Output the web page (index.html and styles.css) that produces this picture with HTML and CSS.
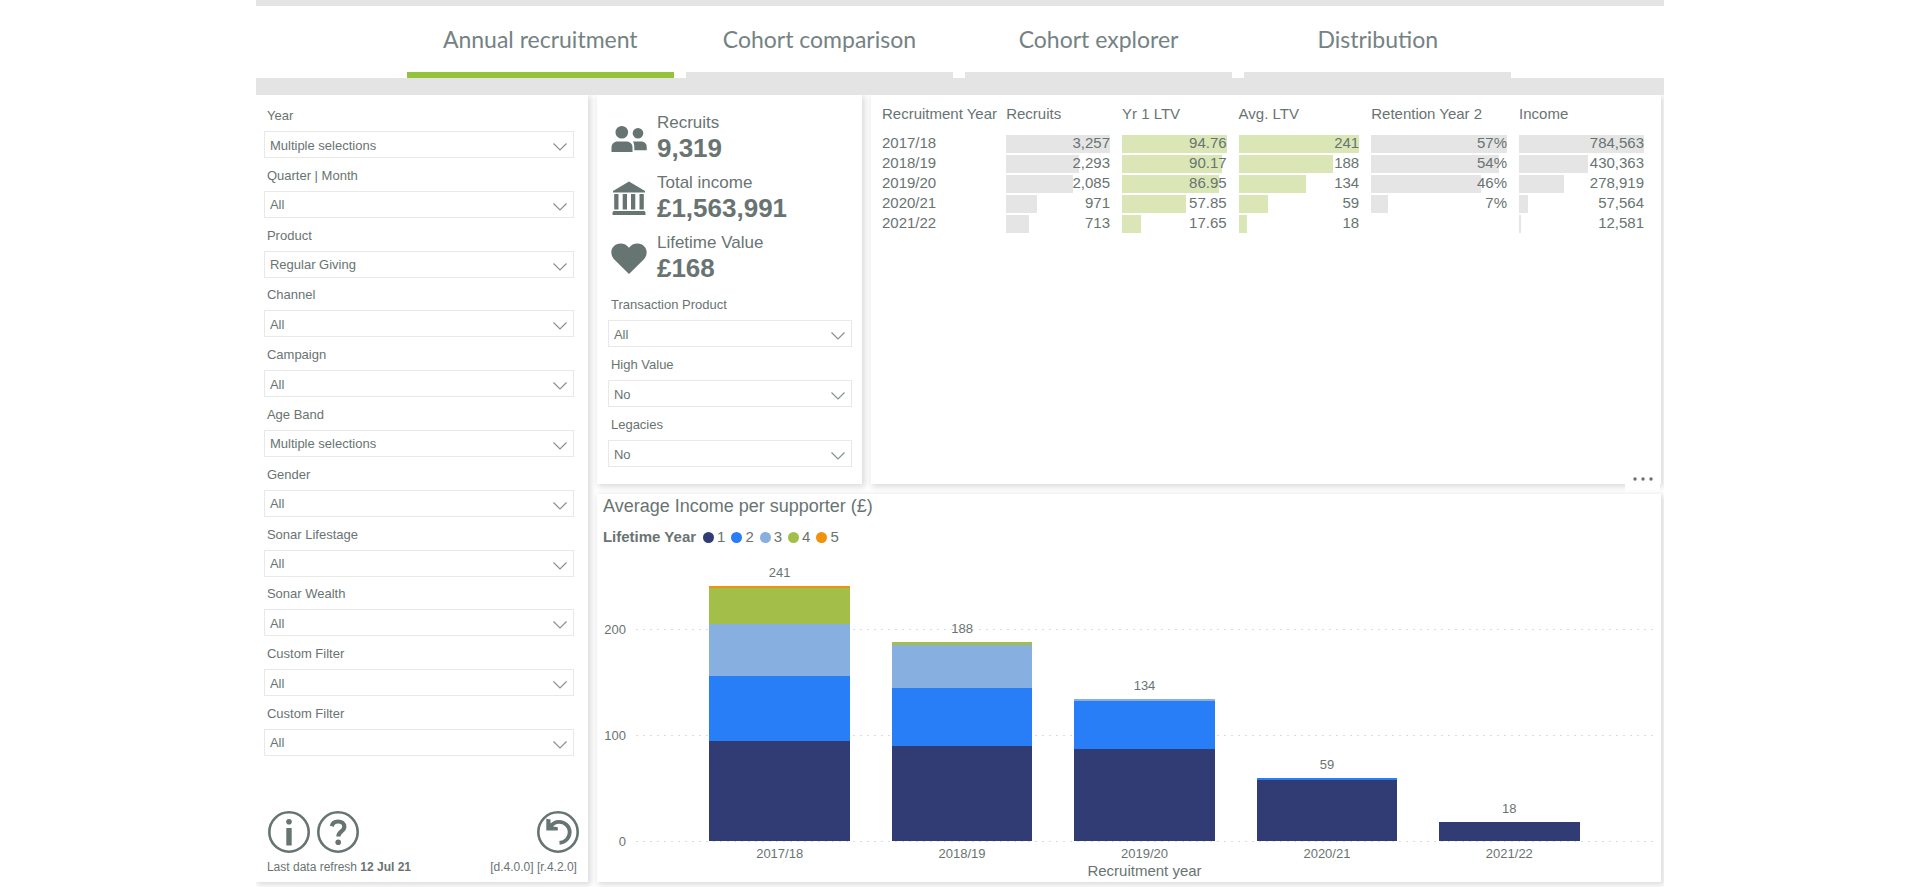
FILE: index.html
```html
<!DOCTYPE html>
<html lang="en">
<head>
<meta charset="utf-8">
<title>Annual recruitment</title>
<link rel="stylesheet" href="styles.css">
</head>
<body>
<svg class="sprite" aria-hidden="true">
  <symbol id="chevron" viewBox="0 0 14 8"><path d="M0.500 0.500 7 7 13.500 0.500" fill="none" stroke="currentColor" stroke-width="1.200"/></symbol>
</svg>
<div class="report">
  <nav class="tabs">
    <a class="tab active" href="#annual" aria-current="page">Annual recruitment</a>
    <a class="tab" href="#comparison">Cohort comparison</a>
    <a class="tab" href="#explorer">Cohort explorer</a>
    <a class="tab" href="#distribution">Distribution</a>
  </nav>

  <main class="board">
    <aside class="panel sidebar">
      <div class="filters">
        <div class="field"><label for="year">Year</label><div class="picker"><select id="year"><option>Multiple selections</option></select><svg><use href="#chevron"/></svg></div></div>
        <div class="field"><label for="quarter">Quarter | Month</label><div class="picker"><select id="quarter"><option>All</option></select><svg><use href="#chevron"/></svg></div></div>
        <div class="field"><label for="product">Product</label><div class="picker"><select id="product"><option>Regular Giving</option></select><svg><use href="#chevron"/></svg></div></div>
        <div class="field"><label for="channel">Channel</label><div class="picker"><select id="channel"><option>All</option></select><svg><use href="#chevron"/></svg></div></div>
        <div class="field"><label for="campaign">Campaign</label><div class="picker"><select id="campaign"><option>All</option></select><svg><use href="#chevron"/></svg></div></div>
        <div class="field"><label for="age">Age Band</label><div class="picker"><select id="age"><option>Multiple selections</option></select><svg><use href="#chevron"/></svg></div></div>
        <div class="field"><label for="gender">Gender</label><div class="picker"><select id="gender"><option>All</option></select><svg><use href="#chevron"/></svg></div></div>
        <div class="field"><label for="lifestage">Sonar Lifestage</label><div class="picker"><select id="lifestage"><option>All</option></select><svg><use href="#chevron"/></svg></div></div>
        <div class="field"><label for="wealth">Sonar Wealth</label><div class="picker"><select id="wealth"><option>All</option></select><svg><use href="#chevron"/></svg></div></div>
        <div class="field"><label for="custom1">Custom Filter</label><div class="picker"><select id="custom1"><option>All</option></select><svg><use href="#chevron"/></svg></div></div>
        <div class="field"><label for="custom2">Custom Filter</label><div class="picker"><select id="custom2"><option>All</option></select><svg><use href="#chevron"/></svg></div></div>
      </div>
      <footer class="footer">
        <div class="tools">
          <button type="button" aria-label="Information"><svg viewBox="0 0 42 42"><circle cx="21" cy="21" r="19.700" fill="none" stroke="currentColor" stroke-width="2.600"/><circle cx="21" cy="10.800" r="2.800" fill="currentColor"/><rect x="18.300" y="17" width="5.400" height="17.500" rx="0.500" fill="currentColor"/></svg></button>
          <button type="button" aria-label="Help"><svg viewBox="0 0 42 42"><circle cx="21" cy="21" r="19.700" fill="none" stroke="currentColor" stroke-width="2.600"/><path d="M14.800 15.200C15.600 11.700 18 10.500 21 10.500c3.600 0 6.300 2 6.300 5.200 0 4.800-5.900 4.700-5.900 9.700" fill="none" stroke="currentColor" stroke-width="4.200"/><circle cx="21.200" cy="31.200" r="2.800" fill="currentColor"/></svg></button>
          <button type="button" class="reset" aria-label="Reset filters"><svg viewBox="0 0 42 42"><circle cx="21" cy="21" r="19.700" fill="none" stroke="currentColor" stroke-width="2.600"/><path d="M13.500 15.700C15.500 12.500 18.500 10.800 22 10.800c6 0 10.700 4.500 10.700 10.300 0 5.700-4.400 10.300-10.200 10.700" fill="none" stroke="currentColor" stroke-width="3.800"/><path d="M9.300 7.800v11.600h11.500v-3.200l-4.500-.7-2.800-3.500V8.500z" fill="currentColor"/></svg></button>
        </div>
        <div class="captions"><span>Last data refresh <b>12 Jul 21</b></span><span>[d.4.0.0] [r.4.2.0]</span></div>
      </footer>
    </aside>

    <section class="panel summary">
      <div class="kpis">
        <div class="kpi">
          <svg viewBox="0 0 36 36"><g fill="currentColor"><circle cx="10.800" cy="12.300" r="6.300"/><circle cx="27" cy="13.300" r="5.300"/><path d="M0.500 32v-4.500c0-3.500 2.500-6 6-6h9c3.500 0 6 2.500 6 6V32z"/><path d="M22 21.500h8c3.300 0 5.700 2.200 5.700 5.200v3.600H23.300V27c0-2.200-.4-4-1.300-5.500z"/></g></svg>
          <div><div class="kpi-name">Recruits</div><div class="kpi-value">9,319</div></div>
        </div>
        <div class="kpi">
          <svg viewBox="0 0 36 36"><path fill="currentColor" d="M18 1.500 34 11v1.500H2V11zM3.200 14h4.300v15.500H3.200zm8.500 0H16v15.500h-4.300zm8.300 0h4.300v15.500H20zm8.500 0h4.300v15.500h-4.300zM2.500 31h31l1 1.500V35h-33v-2.500z"/></svg>
          <div><div class="kpi-name">Total income</div><div class="kpi-value">£1,563,991</div></div>
        </div>
        <div class="kpi">
          <svg viewBox="0 0 36 36"><path fill="currentColor" d="M18 34 3.300 19.500C-3 12.500 1.500 3.500 9.500 3.500c3.500 0 6.500 1.500 8.500 4.200 2-2.700 5-4.200 8.500-4.200 8 0 12.500 9 6.200 16z"/></svg>
          <div><div class="kpi-name">Lifetime Value</div><div class="kpi-value">£168</div></div>
        </div>
      </div>
      <div class="options">
        <div class="field"><label for="transaction">Transaction Product</label><div class="picker"><select id="transaction"><option>All</option></select><svg><use href="#chevron"/></svg></div></div>
        <div class="field"><label for="highvalue">High Value</label><div class="picker"><select id="highvalue"><option>No</option></select><svg><use href="#chevron"/></svg></div></div>
        <div class="field"><label for="legacies">Legacies</label><div class="picker"><select id="legacies"><option>No</option></select><svg><use href="#chevron"/></svg></div></div>
      </div>
    </section>

    <section class="panel cohort">
      <table>
        <colgroup><col class="c-year"><col class="c-recruits"><col class="c-first"><col class="c-avg"><col class="c-retention"><col class="c-income"></colgroup>
        <thead><tr><th>Recruitment Year</th><th>Recruits</th><th>Yr 1 LTV</th><th>Avg. LTV</th><th>Retention Year 2</th><th>Income</th></tr></thead>
        <tbody>
          <tr><th scope="row">2017/18</th>
            <td><div class="cell"><i style="width:100%"></i><span>3,257</span></div></td>
            <td><div class="cell green"><i style="width:100%"></i><span>94.76</span></div></td>
            <td><div class="cell green"><i style="width:100%"></i><span>241</span></div></td>
            <td><div class="cell"><i style="width:100%"></i><span>57%</span></div></td>
            <td><div class="cell"><i style="width:100%"></i><span>784,563</span></div></td></tr>
          <tr><th scope="row">2018/19</th>
            <td><div class="cell"><i style="width:70%"></i><span>2,293</span></div></td>
            <td><div class="cell green"><i style="width:96%"></i><span>90.17</span></div></td>
            <td><div class="cell green"><i style="width:78%"></i><span>188</span></div></td>
            <td><div class="cell"><i style="width:94%"></i><span>54%</span></div></td>
            <td><div class="cell"><i style="width:55%"></i><span>430,363</span></div></td></tr>
          <tr><th scope="row">2019/20</th>
            <td><div class="cell"><i style="width:64%"></i><span>2,085</span></div></td>
            <td><div class="cell green"><i style="width:93%"></i><span>86.95</span></div></td>
            <td><div class="cell green"><i style="width:56%"></i><span>134</span></div></td>
            <td><div class="cell"><i style="width:81%"></i><span>46%</span></div></td>
            <td><div class="cell"><i style="width:36%"></i><span>278,919</span></div></td></tr>
          <tr><th scope="row">2020/21</th>
            <td><div class="cell"><i style="width:30%"></i><span>971</span></div></td>
            <td><div class="cell green"><i style="width:61%"></i><span>57.85</span></div></td>
            <td><div class="cell green"><i style="width:24%"></i><span>59</span></div></td>
            <td><div class="cell"><i style="width:12%"></i><span>7%</span></div></td>
            <td><div class="cell"><i style="width:7%"></i><span>57,564</span></div></td></tr>
          <tr><th scope="row">2021/22</th>
            <td><div class="cell"><i style="width:22%"></i><span>713</span></div></td>
            <td><div class="cell green"><i style="width:18%"></i><span>17.65</span></div></td>
            <td><div class="cell green"><i style="width:7%"></i><span>18</span></div></td>
            <td></td>
            <td><div class="cell"><i style="width:1.6%"></i><span>12,581</span></div></td></tr>
        </tbody>
      </table>
      <button type="button" class="more" aria-label="More options"><svg viewBox="0 0 20 4"><circle cx="2" cy="2" r="1.700"/><circle cx="10" cy="2" r="1.700"/><circle cx="18" cy="2" r="1.700"/></svg></button>
    </section>

    <section class="panel chart">
      <h2>Average Income per supporter (£)</h2>
      <div class="legend"><b>Lifetime Year</b>
        <ul>
          <li><i class="y1"></i>1</li><li><i class="y2"></i>2</li><li><i class="y3"></i>3</li><li><i class="y4"></i>4</li><li><i class="y5"></i>5</li>
        </ul>
      </div>
      <div class="plot">
        <div class="gridline" style="bottom:0%"><span>0</span></div>
        <div class="gridline" style="bottom:37.04%"><span>100</span></div>
        <div class="gridline" style="bottom:74.07%"><span>200</span></div>
        <div class="bars">
          <div class="column"><span>241</span><div class="stack" style="height:89.26%"><i class="y5" style="flex-grow:2.5"></i><i class="y4" style="flex-grow:34"></i><i class="y3" style="flex-grow:49"></i><i class="y2" style="flex-grow:61"></i><i class="y1" style="flex-grow:94.76"></i></div></div>
          <div class="column"><span>188</span><div class="stack" style="height:69.63%"><i class="y4" style="flex-grow:3"></i><i class="y3" style="flex-grow:41"></i><i class="y2" style="flex-grow:54"></i><i class="y1" style="flex-grow:90"></i></div></div>
          <div class="column"><span>134</span><div class="stack" style="height:49.63%"><i class="y3" style="flex-grow:2"></i><i class="y2" style="flex-grow:45"></i><i class="y1" style="flex-grow:87"></i></div></div>
          <div class="column"><span>59</span><div class="stack" style="height:22.2%"><i class="y2" style="flex-grow:2"></i><i class="y1" style="flex-grow:57.85"></i></div></div>
          <div class="column"><span>18</span><div class="stack" style="height:6.67%"><i class="y1" style="flex-grow:18"></i></div></div>
        </div>
      </div>
      <div class="ticks"><span>2017/18</span><span>2018/19</span><span>2019/20</span><span>2020/21</span><span>2021/22</span></div>
      <div class="axis-title">Recruitment year</div>
    </section>
  </main>
</div>
</body>
</html>
```

FILE: styles.css
```css
* { box-sizing: border-box; }

body {
  margin: 0;
  background: #fff;
  color: #697472;
  font-family: "Liberation Sans", Arial, sans-serif;
  font-size: 13px;
}

.sprite { position: absolute; width: 0; height: 0; }

.report {
  display: flex;
  flex-direction: column;
  width: 73.34%;
  min-height: 100vh;
  margin: 0 auto;
  border-top: 6px solid #e4e4e4;
  overflow: hidden;
}

/* Page tabs */
.tabs {
  position: relative;
  z-index: 1;
  display: flex;
  justify-content: center;
  gap: 12px;
  height: 89px;
  padding-right: 2px;
  border-bottom: 17px solid #e4e4e4;
  background: #fff;
}

.tab {
  width: 19%;
  padding-top: 18px;
  border-bottom: 6px solid #e4e4e4;
  color: #758284;
  font-family: Lato, sans-serif;
  font-size: 23px;
  line-height: 30px;
  text-align: center;
  text-decoration: none;
}

.tab.active { border-color: #95c23d; }

/* Panels */
.board {
  flex: 1;
  display: grid;
  grid-template-columns: 332fr 265fr 790fr;
  grid-template-rows: auto 1fr;
  gap: 10px 9px;
  padding: 0 3px 5px 0;
}

.panel {
  position: relative;
  background: #fff;
  box-shadow: 2px 2px 6px 1px rgba(0, 0, 0, 0.14);
}

/* Filters */
.sidebar {
  grid-row: 1 / 3;
  display: flex;
  flex-direction: column;
  gap: 55px;
  padding: 12px 9px 7px 8px;
}

.filters {
  flex: 1;
  display: flex;
  flex-direction: column;
  justify-content: space-between;
  padding-right: 5px;
}

.field {
  display: flex;
  flex-direction: column;
  gap: 6px;
}

.field label {
  padding-left: 3px;
  line-height: 18px;
}

.picker { position: relative; display: flex; }

.picker select {
  flex: 1;
  height: 27px;
  padding: 1px 24px 0 5px;
  border: 1px solid #e8e8e8;
  border-radius: 0;
  background: #fff;
  color: inherit;
  font: inherit;
  appearance: none;
}

.picker svg {
  position: absolute;
  top: 12px;
  right: 7px;
  width: 14px;
  height: 8px;
  color: #869290;
  pointer-events: none;
}

.footer { display: flex; flex-direction: column; gap: 6px; }

.tools { display: flex; gap: 7px; padding-left: 4px; }

.tools button {
  width: 42px;
  height: 42px;
  padding: 0;
  border: 0;
  background: none;
  color: #667472;
}

.tools svg { display: block; }

.tools .reset { margin-left: auto; }

.captions {
  display: flex;
  justify-content: space-between;
  padding: 0 2px 0 3px;
  font-size: 12px;
  line-height: 16px;
}

/* Key figures */
.summary {
  display: flex;
  flex-direction: column;
  gap: 13px;
  padding: 18px 10px 17px 11px;
}

.kpis { display: flex; flex-direction: column; gap: 10px; padding-left: 3px; }

.kpi { display: flex; align-items: center; gap: 10px; }

.kpi svg { width: 36px; height: 36px; color: #667472; }

.kpi-name { font-size: 17px; line-height: 20px; }

.kpi-value { font-size: 26px; font-weight: bold; line-height: 30px; }

.options { display: flex; flex-direction: column; gap: 9px; }

/* Cohort table */
.cohort { padding: 9px 17px 0 11px; }

.cohort table {
  width: 100%;
  table-layout: fixed;
  border-collapse: collapse;
  font-size: 15px;
}

.c-year { width: 16.3%; }
.c-recruits { width: 15.2%; }
.c-first { width: 15.3%; }
.c-avg { width: 17.4%; }
.c-retention { width: 19.4%; }
.c-income { width: 16.4%; }

.cohort th {
  padding: 0;
  font-weight: normal;
  line-height: 17px;
  text-align: left;
  vertical-align: top;
  white-space: nowrap;
}

.cohort thead th { height: 30px; line-height: 20px; }

.cohort td { height: 20px; padding: 1px 12px 1px 0; }

.cohort td:last-child { padding-right: 0; }

.cell {
  position: relative;
  height: 18px;
  line-height: 16px;
  text-align: right;
}

.cell i { position: absolute; top: 0; bottom: 0; left: 0; background: #e5e5e5; }

.cell.green i { background: #dae6b6; }

.cell span { position: relative; }

.more {
  position: absolute;
  right: 1px;
  bottom: -10px;
  width: 35px;
  height: 24px;
  padding: 0 8px 6px;
  border: 0;
  background: #fff;
}

.more svg { display: block; width: 20px; height: 4px; fill: #707070; }

/* Stacked bar chart */
.chart {
  grid-column: 2 / 4;
  display: flex;
  flex-direction: column;
  padding: 0 8px 2px 6px;
}

.chart h2 { margin: 0; font-size: 18px; font-weight: normal; line-height: 24px; }

.legend {
  display: flex;
  gap: 7px;
  margin: 9px 0 8px;
  font-size: 15px;
  line-height: 20px;
}

.legend ul { display: flex; gap: 6px; margin: 0; padding: 0; list-style: none; }

.legend li { display: flex; align-items: center; gap: 3px; }

.legend i { width: 11px; height: 11px; border-radius: 50%; }

.y1 { background: #303c73; }
.y2 { background: #287ef6; }
.y3 { background: #87afe0; }
.y4 { background: #a3be49; }
.y5 { background: #f0920e; }

.plot {
  position: relative;
  flex: 1;
  display: flex;
  min-height: 280px;
}

.gridline {
  position: absolute;
  left: 0;
  right: 0;
  display: flex;
  align-items: center;
  gap: 10px;
  height: 16px;
  margin-bottom: -8px;
}

.gridline span { width: 23px; text-align: right; }

.gridline::after {
  content: "";
  flex: 1;
  height: 1px;
  background: repeating-linear-gradient(to right, #dcdcdc 0 2px, transparent 2px 7px);
}

.bars, .ticks {
  position: relative;
  flex: 1;
  display: flex;
  margin-left: 33px;
  padding: 0 5%;
}

.column {
  flex: 1;
  display: flex;
  flex-direction: column;
  justify-content: flex-end;
  align-items: center;
}

.column span { margin-bottom: 5px; line-height: 16px; }

.stack { display: flex; flex-direction: column; width: 77%; }

.ticks { flex: none; padding-top: 5px; line-height: 16px; }

.ticks span { flex: 1; text-align: center; }

.axis-title {
  margin-left: 33px;
  font-size: 15px;
  line-height: 18px;
  text-align: center;
}
```
